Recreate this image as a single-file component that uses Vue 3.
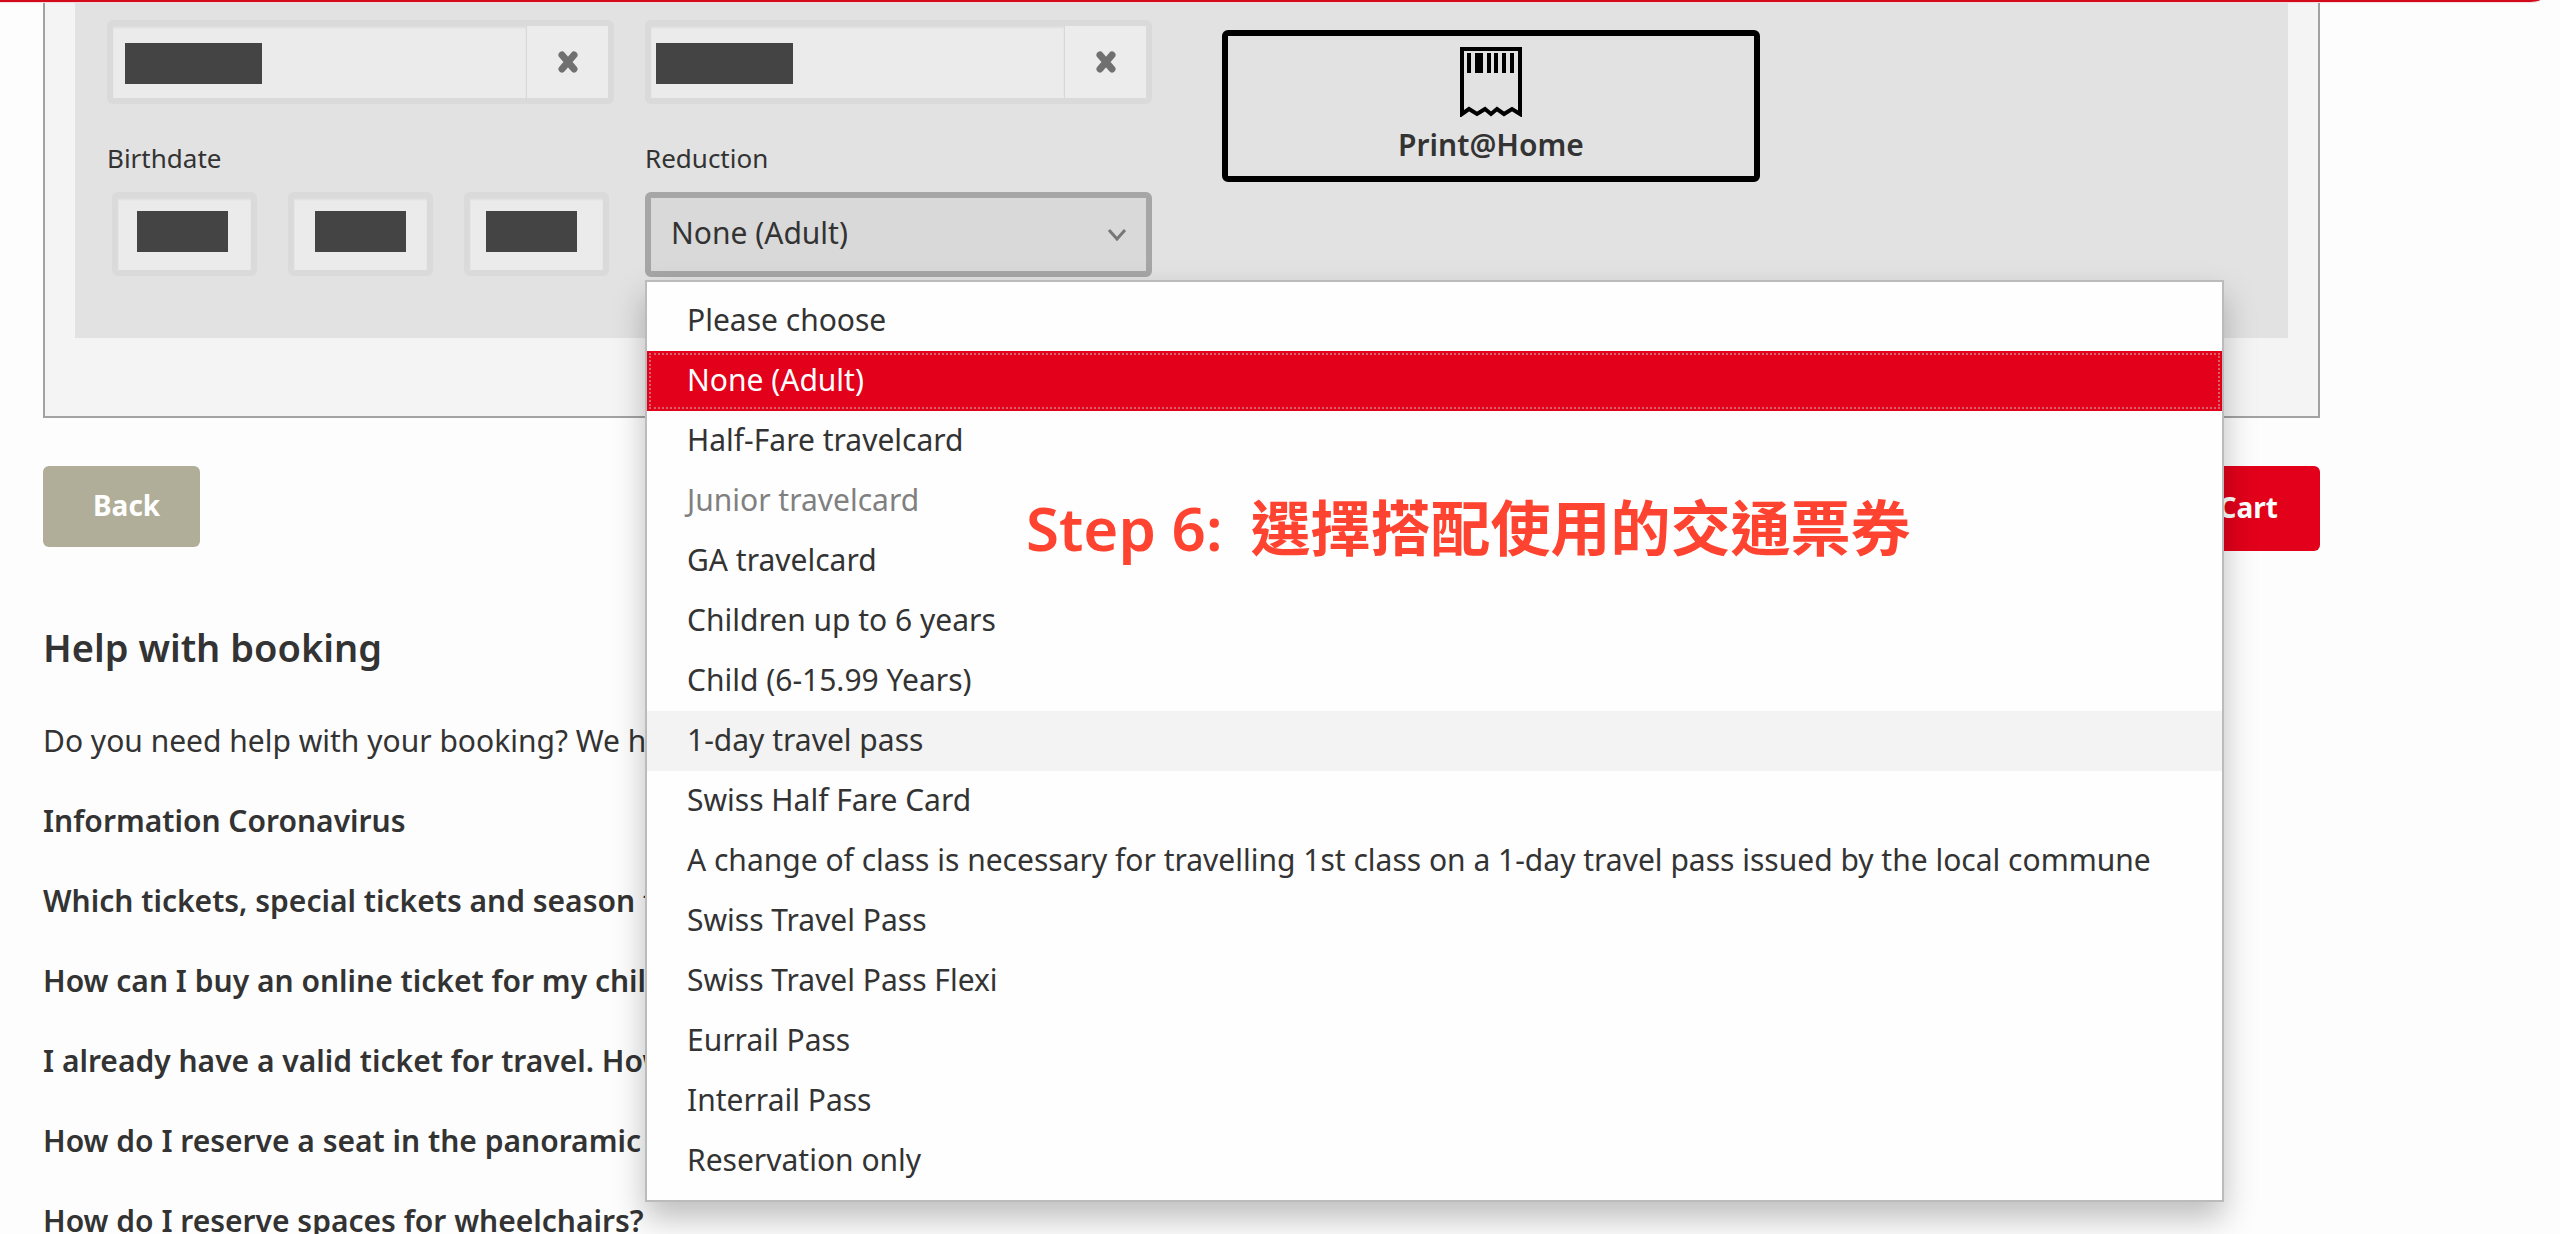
<script setup>
import { ref } from 'vue'

const nameFields = [
  { id: 'surname', label: 'Surname', maskLeft: 12 },
  { id: 'first-name', label: 'First name', maskLeft: 5 },
]

const birthFields = [
  { id: 'birth-day', label: 'Day', maskLeft: 19 },
  { id: 'birth-month', label: 'Month', maskLeft: 21 },
  { id: 'birth-year', label: 'Year', maskLeft: 16 },
]

const reductions = [
  { text: 'Please choose' },
  { text: 'None (Adult)' },
  { text: 'Half-Fare travelcard' },
  { text: 'Junior travelcard', disabled: true },
  { text: 'GA travelcard' },
  { text: 'Children up to 6 years' },
  { text: 'Child (6-15.99 Years)' },
  { text: '1-day travel pass', hovered: true },
  { text: 'Swiss Half Fare Card' },
  { text: 'A change of class is necessary for travelling 1st class on a 1-day travel pass issued by the local commune' },
  { text: 'Swiss Travel Pass' },
  { text: 'Swiss Travel Pass Flexi' },
  { text: 'Eurrail Pass' },
  { text: 'Interrail Pass' },
  { text: 'Reservation only' },
]
const selected = ref('None (Adult)')

const questions = [
  'Information Coronavirus',
  'Which tickets, special tickets and season tickets',
  'How can I buy an online ticket for my child?',
  'I already have a valid ticket for travel. How',
  'How do I reserve a seat in the panoramic',
  'How do I reserve spaces for wheelchairs?',
]
</script>

<template>
  <div class="page">
    <header class="topbar"></header>

    <main class="content">
      <section class="card">
        <form class="passenger" @submit.prevent>
          <div v-for="f in nameFields" :key="f.id" class="field">
            <input :id="f.id" type="text" :aria-label="f.label" />
            <span class="mask wide" :style="{ left: f.maskLeft + 'px' }"></span>
            <button type="button" class="clear" aria-label="Clear">
              <svg viewBox="0 0 22 22" width="22" height="22">
                <path d="M5 4 17 18M17 4 5 18" stroke="#707070" stroke-width="7" stroke-linecap="round" />
              </svg>
            </button>
          </div>

          <button type="button" class="print">
            <svg viewBox="0 0 62 70" width="62" height="70" fill="none" stroke="#000" stroke-width="4">
              <path d="M2 67V2H60V67L52 62L44 67L37 62L31 67L25 62L17 67L9 62Z" />
              <path d="M9 6V26M29 6V26M36 6V26M44 6V26M52 6V26" />
              <path d="M19 6V26" stroke-width="8" />
            </svg>
            <span>Print@Home</span>
          </button>

          <fieldset class="birthdate">
            <legend class="label">Birthdate</legend>
            <div class="birth-row">
              <div v-for="f in birthFields" :key="f.id" class="field">
                <input :id="f.id" type="text" :aria-label="f.label" />
                <span class="mask" :style="{ left: f.maskLeft + 'px' }"></span>
              </div>
            </div>
          </fieldset>

          <div class="reduction">
            <label class="label" for="reduction">Reduction</label>
            <div class="select-wrap">
              <select id="reduction" v-model="selected">
                <option v-for="r in reductions" :key="r.text" :disabled="r.disabled">{{ r.text }}</option>
              </select>
              <svg class="chevron" viewBox="0 0 20 14" width="20" height="14" fill="none" stroke="#777" stroke-width="3">
                <path d="M2 2 10 11 18 2" />
              </svg>
              <ul class="menu" role="listbox" aria-label="Reduction">
                <li
                  v-for="r in reductions"
                  :key="r.text"
                  role="option"
                  :aria-selected="r.text === selected"
                  :class="{ selected: r.text === selected, disabled: r.disabled, hovered: r.hovered }"
                  @click="!r.disabled && (selected = r.text)"
                >{{ r.text }}</li>
              </ul>
            </div>
          </div>
        </form>
      </section>

      <div class="actions">
        <button type="button" class="back">Back</button>
        <button type="button" class="cart">Add to Cart</button>
      </div>

      <section class="help">
        <h2>Help with booking</h2>
        <p>Do you need help with your booking? We have</p>
        <a v-for="q in questions" :key="q" href="#">{{ q }}</a>
      </section>
    </main>

    <p class="note" lang="zh-Hant"><span>Step 6:</span><span>選擇搭配使用的交通票券</span></p>
  </div>
</template>

<style>
body {
  margin: 0;
  background: #fdfdfd;
}
</style>

<style scoped>
.page {
  position: relative;
  height: 100vh;
  overflow: hidden;
  font-family: 'Noto Sans', 'Open Sans', sans-serif;
  font-size: 30px;
  line-height: 40px;
  color: #333;
}

.page * {
  box-sizing: border-box;
}

button,
input,
select {
  margin: 0;
  font: inherit;
  color: inherit;
}

.topbar {
  position: absolute;
  top: 0;
  left: 0;
  right: 20px;
  height: 2px;
  background: #d20a1b;
  border-bottom-right-radius: 16px 2px;
  box-shadow: 0 1px 0 #f3dcdf;
}

.content {
  padding: 0 240px 0 43px;
}

.card {
  padding: 0 30px 78px;
  background: #f4f4f4;
  border: 2px solid #a2a2a2;
  border-top: 0;
}

.passenger {
  display: grid;
  grid-template-columns: minmax(0, 507px) minmax(0, 507px) minmax(0, 538px);
  grid-template-rows: 84px auto;
  gap: 36px 31px;
  padding: 20px 32px 61px;
  background: #e2e2e2;
}

.field {
  position: relative;
  display: flex;
  height: 84px;
  border: 6px solid #dadada;
  border-radius: 6px;
  background: #ebebeb;
}

.field input {
  flex: 1;
  width: 0;
  padding: 0 12px;
  border: 0;
  background: transparent;
  box-shadow: inset 0 2px 2px #dedede;
}

.mask {
  position: absolute;
  top: 13px;
  width: 91px;
  height: 41px;
  background: #444;
}

.mask.wide {
  top: 17px;
  width: 137px;
}

.clear {
  display: grid;
  place-items: center;
  width: 82px;
  padding: 0;
  border: 0;
  border-left: 1px solid #d8d8d8;
  background: #ececec;
}

.print {
  display: flex;
  flex-direction: column;
  align-items: center;
  grid-row: 1 / span 2;
  grid-column: 3;
  height: 152px;
  margin: 10px -39px 0 39px;
  padding: 11px 0 0;
  border: 6px solid #000;
  border-radius: 6px;
  background: transparent;
  font-weight: 600;
}

.print span {
  line-height: 56px;
}

.label {
  display: block;
  height: 36px;
  padding: 0;
  margin-bottom: 16px;
  font-size: 26px;
  line-height: 36px;
}

.birthdate {
  min-width: 0;
  margin: 0;
  padding: 0;
  border: 0;
}

.birth-row {
  display: flex;
  gap: 31px;
  padding: 0 5px;
}

.birth-row .field {
  flex: 1;
}

.select-wrap {
  position: relative;
}

select {
  display: block;
  width: 100%;
  height: 85px;
  padding: 0 60px 4px 20px;
  border: 6px solid #a6a6a6;
  border-radius: 6px;
  background: #d9d9d9;
  appearance: none;
}

.chevron {
  position: absolute;
  right: 25px;
  top: 36px;
}

.menu {
  position: absolute;
  z-index: 2;
  top: 88px;
  left: 0;
  width: 1579px;
  margin: 0;
  padding: 9px 0;
  border: 2px solid #bbb;
  background: #fefefe;
  box-shadow: 0 16px 30px rgba(0, 0, 0, 0.25);
  list-style: none;
}

.menu li {
  height: 60px;
  padding: 0 40px;
  line-height: 58px;
  white-space: nowrap;
}

.menu .selected {
  background: #e2001a;
  color: #fff;
  outline: 2px dotted #d8636c;
  outline-offset: -4px;
}

.menu .disabled {
  color: #808080;
}

.menu .hovered {
  background: #f3f3f3;
}

.actions {
  display: flex;
  justify-content: space-between;
  align-items: flex-start;
  margin-top: 48px;
  height: 85px;
}

.back,
.cart {
  padding: 0 42px 4px;
  border: 0;
  border-radius: 6px;
  color: #fff;
  font-size: 28px;
  font-weight: 700;
}

.back {
  width: 157px;
  height: 81px;
  padding-left: 50px;
  background: #b0ae99;
}

.cart {
  height: 85px;
  background: #e2001a;
}

.help {
  display: flex;
  flex-direction: column;
  align-items: flex-start;
  gap: 40px;
  padding-top: 72px;
  white-space: nowrap;
}

.help h2 {
  margin: 0 0 10px;
  font-size: 38px;
  font-weight: 600;
  line-height: 48px;
}

.help p {
  margin: 0;
}

.help a {
  color: inherit;
  font-weight: 600;
  text-decoration: none;
}

.note {
  position: absolute;
  z-index: 3;
  top: 488px;
  left: 1026px;
  display: flex;
  gap: 28px;
  margin: 0;
  color: #fe4430;
  font-family: 'Noto Sans', 'Noto Sans CJK TC', sans-serif;
  font-size: 60px;
  font-weight: 600;
  line-height: 80px;
  white-space: nowrap;
}
</style>
